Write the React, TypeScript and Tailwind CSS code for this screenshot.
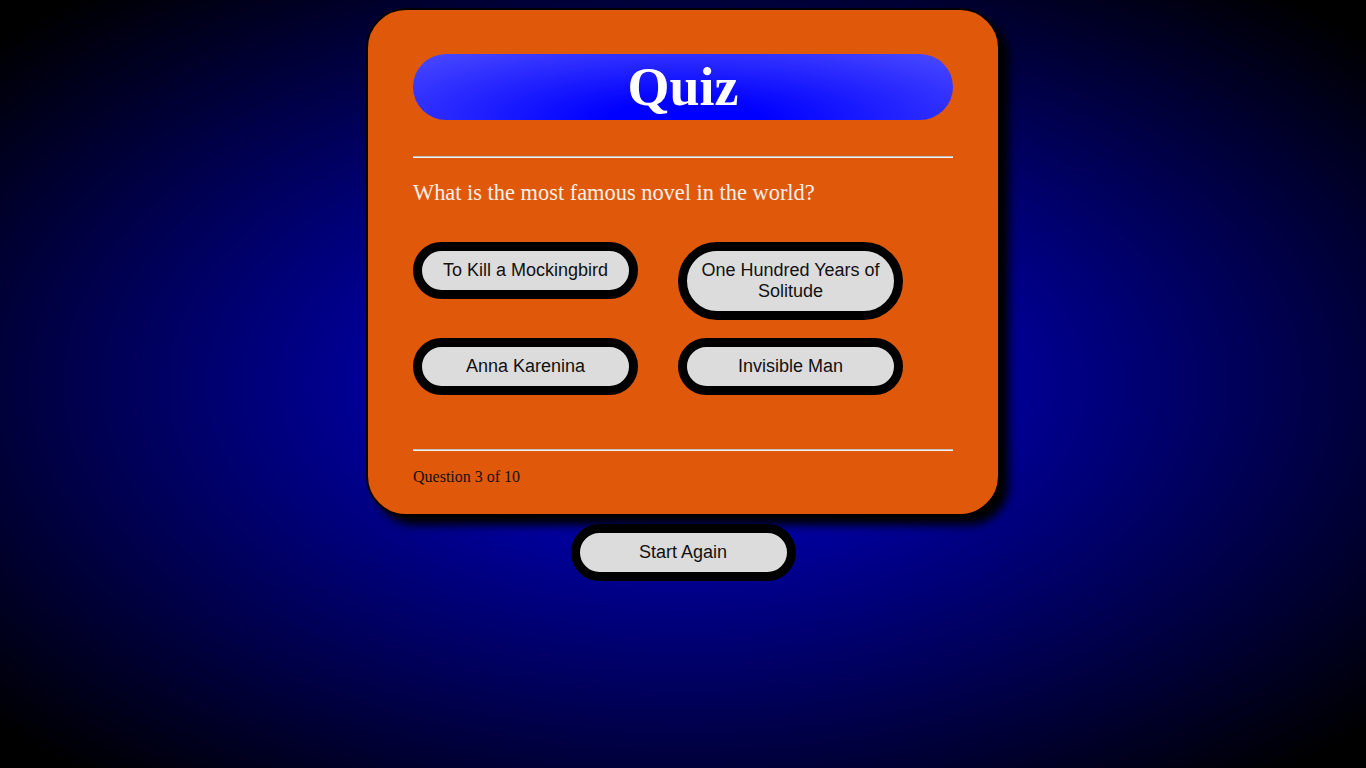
import React from "react"

const answers = [
  "To Kill a Mockingbird",
  "One Hundred Years of Solitude",
  "Anna Karenina",
  "Invisible Man",
]

function PillButton({ label }: { label: string }) {
  return (
    <button className="w-[225px] rounded-full border-[9px] border-black bg-[#dcdcdc] px-[12px] py-[9px] text-center font-['Liberation_Sans',Arial,sans-serif] text-[18px] leading-[21px] text-[#111]">
      {label}
    </button>
  )
}

export default function App() {
  return (
    <div className="flex min-h-[768px] w-full flex-col items-center bg-[radial-gradient(ellipse_farthest-corner_at_center,#0000a8_0%,#0000a8_25%,#000000_95%)]">
      {/* card */}
      <div className="mt-[8px] w-[634px] rounded-[40px] border-2 border-black bg-[#e0580a] px-[45px] pt-[44px] pb-[28px] shadow-[9px_9px_10px_#000]">
        <div className="flex h-[66px] items-center justify-center rounded-full bg-[radial-gradient(ellipse_at_bottom,#0000ff_20%,#4b4bff_100%)]">
          <h1 className="font-['Liberation_Serif','Times_New_Roman',serif] text-[54px] font-bold leading-none text-white">
            Quiz
          </h1>
        </div>

        <hr className="mt-[36px] border-0 border-t border-b border-t-[#bdbdbd] border-b-[#f4f4f4]" />

        <p className="mt-[22px] font-['Liberation_Serif','Times_New_Roman',serif] text-[22.4px] leading-[25px] text-[#f8f0ea]">
          What is the most famous novel in the world?
        </p>

        {/* answers */}
        <div className="mt-[37px] grid w-[490px] grid-cols-[225px_225px] items-start gap-x-[40px] gap-y-[18px]">
          {answers.map((a) => (
            <PillButton key={a} label={a} />
          ))}
        </div>

        <hr className="mt-[54px] border-0 border-t border-b border-t-[#bdbdbd] border-b-[#f4f4f4]" />

        <p className="mt-[17px] font-['Liberation_Serif','Times_New_Roman',serif] text-[16px] leading-[18px] text-[#111]">
          Question 3 of 10
        </p>
      </div>

      <div className="mt-[8px]">
        <PillButton label="Start Again" />
      </div>
    </div>
  )
}
